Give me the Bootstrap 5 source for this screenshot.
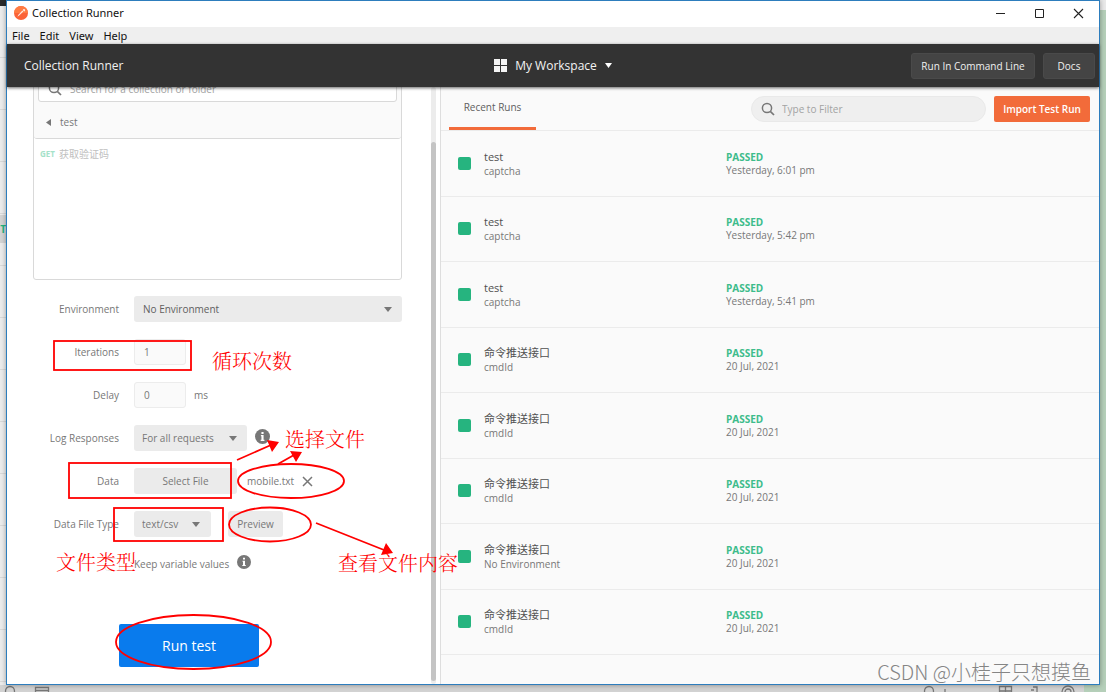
<!DOCTYPE html>
<html lang="zh-CN">
<head>
<meta charset="utf-8">
<meta name="viewport" content="width=device-width, initial-scale=1">
<title>Collection Runner</title>
<link rel="stylesheet" href="https://cdn.jsdelivr.net/npm/bootstrap@5.3.0/dist/css/bootstrap.min.css">
<script src="https://cdn.jsdelivr.net/npm/bootstrap@5.3.0/dist/js/bootstrap.bundle.min.js"></script>
<style>
  body { font-family: "Open Sans", "Noto Sans CJK SC", sans-serif; font-size: 10px; line-height: 14px; color: #777; }
  .desktop { min-height: 100vh; display: grid; grid-template-columns: 6px minmax(0, 1fr) 6px; grid-template-rows: minmax(0, 1fr) 7px; background: #d6d6d6; overflow: hidden; }
  .edge-left { background: #ececec repeating-linear-gradient(#ececec 0 51px, #d9d9d9 51px 52px); border-top: 6px solid #2b2b2b; padding-top: 209px; overflow: hidden; }
  .edge-left div { height: 28px; background: #d4d4d4; color: #26b47f; font-weight: 700; line-height: 28px; direction: rtl; }
  .edge-right { background: #b5cfb9; border-top: 10px solid #e9e9e9; }
  .edge-bottom { grid-column: 1 / 4; overflow: hidden; background: linear-gradient(to left, #b5cfb9 22px, #d2d2d2 22px); }
  .app-window { border: 1px solid #2d7dbd; background: #fff; display: flex; flex-direction: column; position: relative; box-shadow: 0 0 5px rgba(0,0,0,.35); }
  .titlebar { height: 26px; color: #111; padding: 0 1px 2px 7px; }
  .titlebar, .menubar { font-family: "Noto Sans", sans-serif; font-size: 11px; }
  .win-btn { width: 39px; height: 24px; padding: 0; border: 0; background: none; line-height: 0; }
  .menubar { height: 17px; background: #efefef; padding-left: 5px; gap: 10px; }
  .menubar a { color: #111; text-decoration: none; }
  .topbar { height: 43px; background: #333; color: #f0f0f0; display: grid; grid-template-columns: 1fr auto 1fr; align-items: center; padding: 0 4px; box-shadow: 0 1px 3px rgba(0,0,0,.6); position: relative; z-index: 1; font-size: 12px; font-weight: 500; }
  .topbar-name { padding-left: 13px; }
  .btn-tool { width: 124px; height: 26px; padding: 0; font-size: 10px; font-weight: 500; line-height: 24px; border-radius: 3px; background: #444; color: #f0f0f0; border: 1px solid #4a4a4a; white-space: nowrap; }
  .btn-docs { width: 52px; }
  .btn-plain { border: 0; background: none; padding: 0; color: #f3f3f3; font-size: 12px; font-weight: 500; }
  .work { flex: 1; display: flex; min-height: 0; position: relative; }
  .setup { flex: 0 0 433px; min-width: 0; overflow: hidden; }
  .setup-body { flex: 1; display: flex; flex-direction: column; justify-content: flex-end; overflow: hidden; padding: 0 29px 17px 26px; height: 597px; }
  .track { width: 5px; margin-right: 4px; background: #ececec; padding: 55px 0 3px; border-radius: 3px; }
  .thumb { height: 100%; background: #c4c4c4; border-radius: 3px; }
  .picker { border: 1px solid #d9d9d9; border-radius: 3px; height: 211px; flex: none; margin-bottom: 16px; }
  .picker-head { background: #fafafa; border-bottom: 1px solid #d9d9d9; padding: 6px 4px 0; border-radius: 3px; }
  .find { height: 26px; border: 1px solid #d9d9d9; border-radius: 3px; background: #fff; padding: 0 9px; gap: 8px; }
  .find input, .filter input { border: 0; background: none; outline: 0; padding: 0; font-size: 10px; line-height: 14px; flex: 1; min-width: 0; color: #555; }
  .find input::placeholder, .filter input::placeholder { color: #a3a3a3; opacity: 1; }
  .crumb { height: 36px; padding: 4px 8px 0; gap: 9px; }
  .get { font-size: 8px; font-weight: 700; color: #a5e2c9; padding-left: 2px; }
  .faded { color: #c0c0c0; }
  .fields { display: flex; flex-direction: column; gap: 17px; }
  .field-row { display: flex; align-items: center; height: 26px; }
  .field-name { width: 86px; margin-right: 15px; text-align: right; white-space: nowrap; }
  .ctl { height: 26px; border-radius: 3px; font-size: 10px; line-height: 14px; padding: 0 9px; color: #777; }
  .ctl-input { width: 52px; background: #fafafa; border: 1px solid #ececec; }
  .ctl-select { border: 0; background-color: #ebebeb; background-image: url("data:image/svg+xml,%3Csvg xmlns='http://www.w3.org/2000/svg' viewBox='0 0 8 5'%3E%3Cpath d='M0 0h8L4 5z' fill='%23777'/%3E%3C/svg%3E"); background-size: 8px 5px; background-position: right 10px center; padding: 0 8px; }
  .ctl-env { padding-left: 9px; color: #606060; }
  .w-log { width: 113px; }
  .w-type { width: 77px; background-position: right 11px center; }
  .ctl-btn { border: 0; background: #ebebeb; }
  .w-file { width: 103px; }
  .file-name { margin: 0 8px 0 10px; }
  .w-prev { width: 55px; margin-left: 17px; padding: 0; }
  .keep { display: flex; align-items: center; height: 26px; margin: 18px 0 51px; padding-left: 72px; }
  .keep input { width: 15px; height: 13px; margin: 0 14px 0 0; border: 1px solid #ececec; border-radius: 2px; }
  .btn-run { width: 140px; height: 43px; margin-left: 86px; background: #097bed; color: #fff; border: 0; border-radius: 2px; font-size: 14px; flex: none; }
  .results { flex: 1; min-width: 0; background: #fafafa; border-left: 1px solid #dedede; display: flex; flex-direction: column; }
  .results-head { height: 44px; border-bottom: 1px solid #ebebeb; padding: 0 9px 0 8px; }
  .run-tab { align-self: stretch; width: 87px; border: 0; border-bottom: 3px solid #f26b3a; background: none; padding: 0; color: #606060; }
  .filter { width: 235px; height: 26px; border-radius: 13px; border: 1px solid #e9e9e9; background: #efefef; padding: 0 9px; gap: 7px; }
  .btn-import { width: 96px; height: 26px; padding: 0; background: #f26b3a; color: #fff; border: 0; border-radius: 2px; font-weight: 600; white-space: nowrap; margin-left: 8px; }
  .runs { flex: 1; list-style: none; margin: 0; padding: 0 0 29px; display: flex; flex-direction: column; }
  .runs li { flex: 1; display: flex; align-items: center; border-bottom: 1px solid #ebebeb; padding-left: 17px; }
  .dot { width: 13px; height: 13px; border-radius: 2px; background: #26b47f; margin-right: 13px; }
  .run-name { width: 242px; padding-top: 1px; }
  .run-name strong { display: block; font-size: 11px; font-weight: 400; color: #505050; }
  .run-info { line-height: 13px; padding-top: 1px; }
  .run-info strong { display: block; color: #3dbc8b; font-weight: 700; }
  .notes { position: absolute; left: 0; bottom: 0; z-index: 2; pointer-events: none; }
  .notes text { font-family: "Noto Serif CJK SC", "Noto Sans CJK SC", serif; font-size: 20px; font-weight: 300; fill: #f00; }
  .credit { position: absolute; right: 8px; bottom: 0; font: 300 20px/24px "Noto Sans CJK SC", sans-serif; color: #858585; }
</style>
</head>
<body>
<div class="desktop">
  <div class="edge-left" aria-hidden="true"><div>T</div></div>
  <div class="app-window">
    <div class="titlebar d-flex align-items-center">
      <svg width="14" height="14" viewBox="0 0 14 14"><circle cx="7" cy="7" r="7" fill="#fb6337"/><path d="M0 7a7 7 0 0 1 14 0z" fill="#ff7b42"/><path d="M3.4 10.7l1-2 4-4.2 1 1-4.2 4zM8.8 4.2a1.2 1.2 0 1 1 1.4 1.3z" fill="#ffe8df"/></svg>
      <span class="ms-1 me-auto">Collection Runner</span>
      <button class="win-btn" aria-label="Minimize"><svg width="11" height="11"><path d="M1 5.5h9" stroke="#222"/></svg></button>
      <button class="win-btn" aria-label="Maximize"><svg width="11" height="11"><path d="M1.5 1.5h8v8h-8z" fill="none" stroke="#222"/></svg></button>
      <button class="win-btn" aria-label="Close"><svg width="11" height="11"><path d="M1 1l9 9M10 1l-9 9" stroke="#222" stroke-width="1.1"/></svg></button>
    </div>
    <nav class="menubar d-flex align-items-center"><a href="#">File</a><a href="#">Edit</a><a href="#">View</a><a href="#">Help</a></nav>
    <header class="topbar">
      <span class="topbar-name">Collection Runner</span>
      <button class="btn-plain d-flex align-items-center">
        <svg width="13" height="13" class="me-2"><path d="M0 0h6v6H0zM7 0h6v6H7zM0 7h6v6H0zM7 7h6v6H7z" fill="#f5f5f5"/></svg>
        My Workspace
        <svg width="7" height="5" class="ms-2"><path d="M0 0h7L3.500 5z" fill="#fff"/></svg>
      </button>
      <div class="d-flex justify-content-end gap-2">
        <button class="btn btn-tool">Run In Command Line</button>
        <button class="btn btn-tool btn-docs">Docs</button>
      </div>
    </header>
    <main class="work">
      <section class="setup d-flex">
        <form class="setup-body" onsubmit="return false">
          <div class="picker">
            <div class="picker-head">
              <div class="find d-flex align-items-center">
                <svg width="14" height="14" viewBox="0 0 14 14"><circle cx="6" cy="6" r="4.600" fill="none" stroke="#777" stroke-width="1.500"/><path d="M9.300 9.300l3.700 3.700" stroke="#777" stroke-width="1.700"/></svg>
                <input type="text" placeholder="Search for a collection or folder" aria-label="Search for a collection or folder">
              </div>
              <div class="crumb d-flex align-items-center"><svg width="5" height="7"><path d="M5 0v7L0 3.500z" fill="#777"/></svg><span>test</span></div>
            </div>
            <div class="d-flex align-items-center px-1 pt-2"><span class="get">GET</span><span class="faded ms-1">获取验证码</span></div>
          </div>
          <div class="fields">
            <div class="field-row"><label class="field-name" for="env">Environment</label><select id="env" class="form-select ctl ctl-select ctl-env flex-grow-1 w-auto"><option>No Environment</option></select></div>
            <div class="field-row"><label class="field-name" for="iter">Iterations</label><input id="iter" class="ctl ctl-input" type="text" value="1"></div>
            <div class="field-row"><label class="field-name" for="delay">Delay</label><input id="delay" class="ctl ctl-input" type="text" value="0"><span class="ms-2">ms</span></div>
            <div class="field-row"><label class="field-name" for="log">Log Responses</label><select id="log" class="form-select ctl ctl-select w-log"><option>For all requests</option></select>
              <svg class="ms-2 mb-1" width="15" height="15" viewBox="0 0 14 14"><circle cx="7" cy="7" r="7" fill="#777"/><path d="M6 2.800h2v1.800H6zM5.500 5.700H8v4.400h.8v1H5.300v-1H6V6.700h-.5z" fill="#fff"/></svg></div>
            <div class="field-row"><label class="field-name" for="file">Data</label><button id="file" type="button" class="ctl ctl-btn w-file">Select File</button><span class="file-name">mobile.txt</span>
              <svg width="11" height="11"><path d="M1 1l9 9M10 1l-9 9" stroke="#777" stroke-width="1.500"/></svg></div>
            <div class="field-row"><label class="field-name" for="ftype">Data File Type</label><select id="ftype" class="form-select ctl ctl-select w-type"><option>text/csv</option></select><button type="button" class="ctl ctl-btn w-prev">Preview</button></div>
          </div>
          <div class="keep"><input class="form-check-input" type="checkbox" id="keep"><label for="keep">Keep variable values</label>
            <svg class="ms-2 mb-1" width="14" height="14" viewBox="0 0 14 14"><circle cx="7" cy="7" r="7" fill="#777"/><path d="M6 2.800h2v1.800H6zM5.500 5.700H8v4.400h.8v1H5.300v-1H6V6.700h-.5z" fill="#fff"/></svg></div>
          <button type="button" class="btn-run">Run test</button>
        </form>
        <div class="track"><div class="thumb"></div></div>
      </section>
      <section class="results">
        <div class="results-head d-flex align-items-center">
          <button class="run-tab me-auto">Recent Runs</button>
          <div class="filter d-flex align-items-center">
            <svg width="14" height="14" viewBox="0 0 14 14"><circle cx="6" cy="6" r="4.600" fill="none" stroke="#777" stroke-width="1.500"/><path d="M9.300 9.300l3.700 3.700" stroke="#777" stroke-width="1.700"/></svg>
            <input type="text" placeholder="Type to Filter" aria-label="Type to Filter">
          </div>
          <button class="btn-import">Import Test Run</button>
        </div>
        <ul class="runs">
          <li><span class="dot"></span><div class="run-name"><strong>test</strong>captcha</div><div class="run-info"><strong>PASSED</strong>Yesterday, 6:01 pm</div></li>
          <li><span class="dot"></span><div class="run-name"><strong>test</strong>captcha</div><div class="run-info"><strong>PASSED</strong>Yesterday, 5:42 pm</div></li>
          <li><span class="dot"></span><div class="run-name"><strong>test</strong>captcha</div><div class="run-info"><strong>PASSED</strong>Yesterday, 5:41 pm</div></li>
          <li><span class="dot"></span><div class="run-name"><strong>命令推送接口</strong>cmdId</div><div class="run-info"><strong>PASSED</strong>20 Jul, 2021</div></li>
          <li><span class="dot"></span><div class="run-name"><strong>命令推送接口</strong>cmdId</div><div class="run-info"><strong>PASSED</strong>20 Jul, 2021</div></li>
          <li><span class="dot"></span><div class="run-name"><strong>命令推送接口</strong>cmdId</div><div class="run-info"><strong>PASSED</strong>20 Jul, 2021</div></li>
          <li><span class="dot"></span><div class="run-name"><strong>命令推送接口</strong>No Environment</div><div class="run-info"><strong>PASSED</strong>20 Jul, 2021</div></li>
          <li><span class="dot"></span><div class="run-name"><strong>命令推送接口</strong>cmdId</div><div class="run-info"><strong>PASSED</strong>20 Jul, 2021</div></li>
        </ul>
      </section>
      <!-- hand-drawn notes over the form -->
      <svg class="notes" width="473" height="597" viewBox="7 87 473 597">
        <g fill="none" stroke="#f00" stroke-width="1.800">
          <rect x="54" y="341" width="137" height="29"/>
          <rect x="69" y="463" width="162" height="35"/>
          <rect x="114" y="508" width="109" height="33"/>
          <ellipse cx="291" cy="481" rx="53" ry="17"/>
          <ellipse cx="270" cy="524.500" rx="41" ry="17"/>
          <ellipse cx="193.500" cy="642" rx="77.500" ry="27"/>
          <path d="M237 460l34-15M278 464l16-9M316 523l68 27"/>
        </g>
        <path d="M267 440l12 2-7 10zM290 451l12 1-6 10zM386 543l7 10-12 2z" fill="#f00"/>
        <text x="212" y="369">循环次数</text>
        <text x="285" y="447">选择文件</text>
        <text x="56" y="570">文件类型</text>
        <text x="338" y="571">查看文件内容</text>
      </svg>
      <div class="credit">CSDN @小桂子只想摸鱼</div>
    </main>
  </div>
  <div class="edge-right"></div>
  <div class="edge-bottom d-flex justify-content-between" aria-hidden="true">
    <svg width="60" height="7" fill="none" stroke="#777" stroke-width="1.300"><circle cx="10" cy="6" r="4.500"/><path d="M35.500 8V2.500h13V8M35 5.500h14"/></svg>
    <svg width="190" height="7" fill="none" stroke="#777" stroke-width="1.300"><circle cx="13" cy="6" r="4.500"/><path d="M29 4v4M83.500 8V1.500h12V8M89.500 1v7M83 6h13M117 2h4v6M115 5h3"/><circle cx="152" cy="7" r="6"/><circle cx="152" cy="7" r="3"/></svg>
  </div>
</div>
</body>
</html>
